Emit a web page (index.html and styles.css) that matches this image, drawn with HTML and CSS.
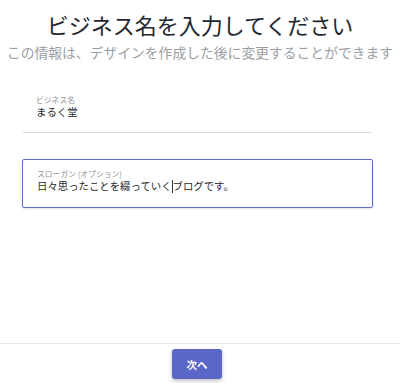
FILE: index.html
```html
<!DOCTYPE html>
<html lang="ja">
<head>
    <meta charset="UTF-8">
    <meta name="viewport" content="width=device-width, initial-scale=1.0">
    <title>ビジネス名を入力</title>
    <link rel="stylesheet" href="styles.css">
</head>
<body>
    <div class="page">
        <h1 class="title">ビジネス名を入力してください</h1>
        <p class="subtitle">この情報は、デザインを作成した後に変更することができます</p>
        <div class="fields">
            <div class="field field-line">
                <div class="field-label">ビジネス名</div>
                <div class="field-value">まるく堂</div>
            </div>
            <div class="field field-box">
                <div class="field-label">スローガン (オプション)</div>
                <div class="field-value">日々思ったことを綴っていく<span class="caret"></span>ブログです。</div>
            </div>
        </div>
    </div>
    <footer class="footer">
        <button class="next" type="button">次へ</button>
    </footer>
</body>
</html>
```

FILE: styles.css
```css
body {
    margin: 0;
    height: 383px;
    display: flex;
    flex-direction: column;
    font-family: "Noto Sans CJK JP", "Noto Sans", sans-serif;
    background-color: #fff;
    color: #2a2e35;
    overflow: hidden;
}

.page {
    flex: 1;
}

.title {
    margin: 9px 0 0;
    font-size: 22px;
    font-weight: 400;
    line-height: 30px;
    text-align: center;
    color: #22272e;
}

.subtitle {
    margin: 3px 0 0;
    font-size: 13.8px;
    line-height: 20px;
    text-align: center;
    color: #9a9ea3;
}

.fields {
    width: 351px;
    margin: 23px 0 0 22px;
}

.field {
    padding: 10px 14px 13px;
}

.field-line {
    border-bottom: 1px solid #d7dce1;
    margin: 0 1px;
    padding-left: 13px;
}

.field-box {
    margin-top: 26px;
    border: 1px solid #5f69c6;
    border-radius: 2px;
    padding-top: 9px;
    padding-bottom: 14px;
    box-shadow: 0 1px 2px rgba(60, 70, 160, 0.15);
}

.field-label {
    font-size: 7.8px;
    line-height: 10px;
    color: #8e9297;
}

.field-value {
    font-size: 10.4px;
    line-height: 14px;
    color: #25292e;
}

.caret {
    display: inline-block;
    width: 0;
    height: 13px;
    border-left: 1px solid #333;
    vertical-align: -3px;
}

.footer {
    height: 40px;
    border-top: 1px solid #e8eaec;
    display: flex;
    justify-content: center;
    padding-top: 5px;
    box-sizing: border-box;
}

.next {
    width: 50px;
    height: 30px;
    margin-right: 6px;
    border: none;
    border-radius: 3px;
    background-color: #5b67c7;
    color: #fff;
    font-family: inherit;
    font-size: 10.5px;
    font-weight: 700;
    box-shadow: 0 2px 4px rgba(0, 0, 0, 0.25);
    cursor: pointer;
}
```
